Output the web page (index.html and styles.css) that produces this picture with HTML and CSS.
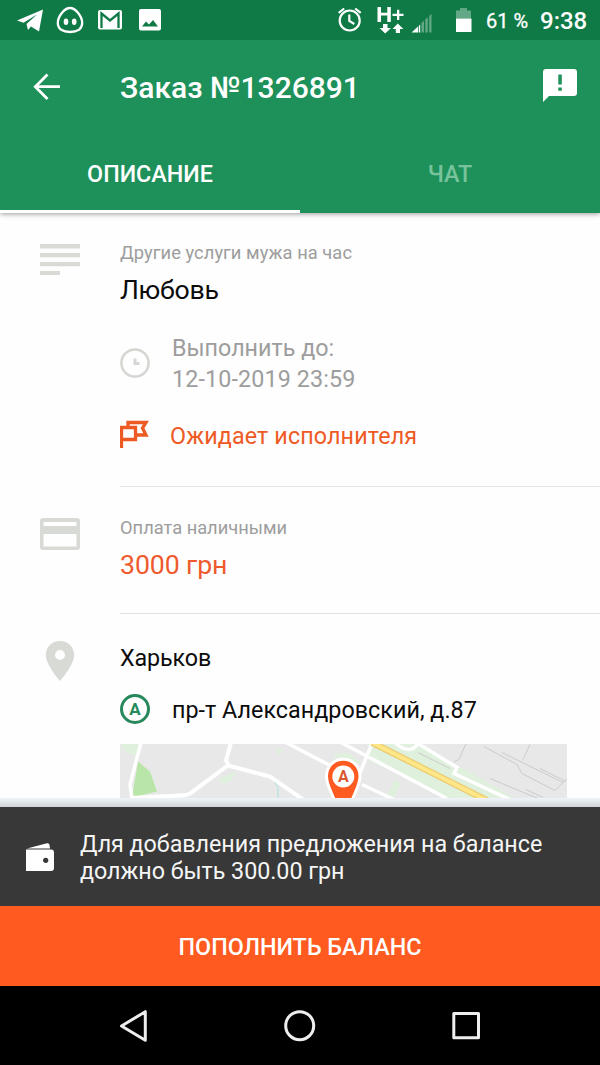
FILE: index.html
```html
<!DOCTYPE html>
<html lang="ru">
<head>
<meta charset="utf-8">
<title>Заказ №1326891</title>
<link rel="stylesheet" href="styles.css">
</head>
<body>
<div class="screen">
  <header class="header">
    <div class="status">
      <svg class="status-left" width="170" height="40" viewBox="0 0 170 40" fill="#fff">
        <path d="M17 20.500 43 9.500 39 31.500 31 26.500 28 30 26.500 24 37 14.500 23.500 22.700z"/>
        <path d="M70 8c5.500 0 12.200 8.500 12.200 15 0 6-5 9-12.200 9s-12.200-3-12.200-9c0-6.500 6.700-15 12.200-15z" fill="none" stroke="#fff" stroke-width="2.300"/>
        <ellipse cx="66" cy="21.700" rx="2.300" ry="3.300"/><ellipse cx="74.200" cy="21.700" rx="2.300" ry="3.300"/>
        <rect x="98" y="10" width="24" height="19.500" rx="2"/>
        <path d="M101.500 28V13.500l8.500 7 8.500-7V28" fill="none" stroke="#0f7a46" stroke-width="2.300"/>
        <path fill-rule="evenodd" d="M141 9h18a2 2 0 0 1 2 2v17.500a2 2 0 0 1-2 2h-18a2 2 0 0 1-2-2V11a2 2 0 0 1 2-2zM142 26.500h16l-5-6.500-4 4.500-3-3z"/>
      </svg>
      <div class="status-right">
        <svg width="150" height="40" viewBox="330 0 150 40" fill="#fff">
          <g fill="none" stroke="#fff" stroke-width="2.200"><circle cx="349.700" cy="20.500" r="10"/><path d="M349.300 14.500v6.500l5 3M338.700 12.800l5.500-4.300M360.700 12.800l-5.500-4.300"/></g>
          <path d="M377.500 7h3.500v5.800h6.300V7h3.500v15h-3.500v-6.500H381V22h-3.500zM397 9.800h2.300v4h4.200v2.200h-4.200v4H397v-4h-4.500v-2.200h4.500z"/>
          <path d="M383 24h4.500v4h3.500l-5.800 5.500-5.700-5.500h3.500zM395.800 33v-4h-3.300l5.300-5.500 5.500 5.500H400v4z"/>
          <path d="M411.500 32.500l6.500-6v6zM418.700 26l1.500-1.500v8h-1.500z"/>
          <path d="M421.500 23l2.500-2.200v11.700h-2.500zM425.300 19.500l2.500-2.300v15.300h-2.500zM429.200 16l2.300-2.200v18.700h-2.300z" opacity=".35"/>
          <path d="M456 18.500v-8h4V8h7v2.500h4v8z" opacity=".35"/><path d="M456 18.500h15.500V32H456z"/>
        </svg>
        <span class="battery">61 %</span>
        <span class="time">9:38</span>
      </div>
    </div>
    <div class="appbar">
      <svg class="back" width="120" height="60" viewBox="0 57 120 60" fill="none" stroke="#fff" stroke-width="2.800"><path d="M60 86.700H35.500M47.500 74.500 35.300 86.700l12.200 12.200"/></svg>
      <h1 class="title">Заказ №1326891</h1>
      <svg class="report" width="34" height="34" viewBox="0 0 34 34"><path fill="#fff" d="M3 0h28a3 3 0 0 1 3 3v21a3 3 0 0 1-3 3H6l-6 6V3a3 3 0 0 1 3-3z"/><path fill="#1e915b" d="M15.300 5.500h3.500v10h-3.500zM15.300 18.500h3.500v3.300h-3.500z"/></svg>
    </div>
    <nav class="tabs">
      <div class="tab tab-active">ОПИСАНИЕ</div>
      <div class="tab">ЧАТ</div>
    </nav>
  </header>

  <main class="content">
    <section class="row">
      <svg class="icon icon-lines" width="40" height="31" viewBox="0 0 40 31" fill="#d8dad5"><path d="M0 0h40v4.500H0zM0 9h40v4.300H0zM0 18h40v4.300H0zM0 27h20v4H0z"/></svg>
      <div class="body body-order">
        <div class="caption category">Другие услуги мужа на час</div>
        <div class="headline name">Любовь</div>
        <div class="line deadline">
          <svg width="30" height="30" viewBox="0 0 30 30" fill="none" stroke="#d5d6d2"><circle cx="15" cy="15" r="13.600" stroke-width="2.500"/><path d="M15 10.500v5h4.500" stroke-width="3"/></svg>
          <div class="deadline-text">Выполнить до:<br><span class="date">12-10-2019 23:59</span></div>
        </div>
        <div class="line state">
          <svg width="29" height="30" viewBox="0 0 29 30" fill="none" stroke="#ee5a24" stroke-width="3.300"><path d="M1.500 29V8.500h14v12h-14M8 8V3.500h18l-3.500 5.500 3.500 7H16"/></svg>
          <span>Ожидает исполнителя</span>
        </div>
      </div>
    </section>
    <section class="row">
      <svg class="icon icon-card" width="40" height="32" viewBox="0 0 40 32"><path fill="#d8dad5" fill-rule="evenodd" d="M3 0h34a3 3 0 0 1 3 3v26a3 3 0 0 1-3 3H3a3 3 0 0 1-3-3V3a3 3 0 0 1 3-3zM3.500 4v4h33V4zM3.500 16v12.500h33V16z"/></svg>
      <div class="body body-pay">
        <div class="caption">Оплата наличными</div>
        <div class="headline price">3000 грн</div>
      </div>
    </section>
    <section class="row">
      <svg class="icon icon-pin" width="40" height="40" viewBox="0 0 40 40"><path fill="#d8dad5" fill-rule="evenodd" d="M20 0c8 0 14.200 6 14.200 14 0 10-14.200 26-14.200 26S5.800 24 5.800 14C5.800 6 12 0 20 0zm0 9a5 5 0 1 0 0 10 5 5 0 0 0 0-10z"/></svg>
      <div class="body body-place">
        <div class="city">Харьков</div>
        <div class="line address">
          <span class="badge">A</span>
          <span>пр-т Александровский, д.87</span>
        </div>
        <svg class="map" width="447" height="54" viewBox="120 744.500 447 54">
          <path fill="#e8e8e8" d="M120 744h447v55H120z"/>
          <path fill="#dff0dd" d="M120 744h20l-4 12-10-3zM367 744h50l68 37 30 18h-68l-78-38zM332 755l15-2 18 12-24-5zM395 780l7 4-9 15h-8zM218 780l18-8-5 9-8 4zM275 749l8 2-3 5z"/>
          <path fill="#b9e6a8" d="M138 762l12 10 7 20-25 6z"/>
          <g fill="none" stroke="#fff" stroke-width="3.500">
            <path d="M141 743l-11 42 2 14"/>
            <path d="M130 798.500l50-2.500q7 0 10-2l38-28 42 11 33 23M229 766l-3-5 5-18" stroke-width="4"/>
            <path d="M286 743l46 24M341 743l106 56M372 744l-14 34M362 785l32 15M395 743c9 9 18 9 23 1l39 24-3 6 58 27"/>
          </g>
          <path d="M372 743l115 58" stroke="#edcb71" stroke-width="6.500" fill="none"/>
          <path d="M372 743l115 58" stroke="#ffe687" stroke-width="4" fill="none"/>
          <g fill="none" stroke="#cbcbcb" stroke-width="1">
            <path d="M466 744l-7 16-5 2M530 745l-7 15M484 747l33 18 5 9 33 17 12-12M502 753l61 30M490 779l48 20M540 769l26 13M526 790l17 8M418 753l32 16"/>
          </g>
          <path d="M275 783l3 5v14" fill="none" stroke="#a5e2dc"/>
          <path d="M343.300 759.800c9 0 16.700 7 16.700 17 0 9-5 15-9 27h-15.500c-4-12-9-18-9-27 0-10 7.500-17 16.800-17z" fill="#ff5a20" stroke="#fff" stroke-width="3"/>
          <circle cx="343.300" cy="777" r="11" fill="#fff"/>
          <text x="343.300" y="782.700" class="map-letter">A</text>
        </svg>
      </div>
    </section>
  </main>

  <footer class="footer">
    <div class="notice">
      <svg class="wallet" width="28" height="28" viewBox="0 0 28 28"><path fill="#fff" d="M1 5.500 21 .300q2-.500 2.500 1.500L24 5.500zM0 6.500h25a3 3 0 0 1 3 3V25a3 3 0 0 1-3 3H0z"/><circle cx="19.700" cy="17.300" r="2.600" fill="#383838"/></svg>
      <div class="notice-text">Для добавления предложения на балансе<br>должно быть 300.00 грн</div>
    </div>
    <div class="topup">ПОПОЛНИТЬ БАЛАНС</div>
    <div class="navbar">
      <svg width="600" height="79" viewBox="0 986 600 79" fill="none" stroke="#eee" stroke-width="3" stroke-linejoin="round"><path d="M121.500 1026 145.300 1011.700v28.600z"/><circle cx="299.700" cy="1025.700" r="14"/><path d="M453.800 1013.500h24.700v24.300h-24.700z"/></svg>
    </div>
  </footer>
</div>
</body>
</html>
```
FILE: styles.css
```css
* { box-sizing: border-box; }
body { margin: 0; font-family: Roboto, "Noto Sans", sans-serif; background: #fefefe; color: #0c0c0c; }
svg { display: block; flex: none; }
span { white-space: nowrap; }
.screen { width: 600px; height: 1065px; display: flex; flex-direction: column; overflow: hidden; }
.header { flex: none; height: 213px; background: #1e915b; color: #fff; box-shadow: 0 1px 5px rgba(0, 0, 0, .4); }
.status { height: 40px; background: #0f7a46; display: flex; justify-content: space-between; }
.status-right { display: flex; align-items: center; width: 270px; line-height: 40px; }
.battery { margin-left: 6px; font-size: 20px; width: 54px; padding-top: 1px; -webkit-text-stroke: .3px #fff; }
.time { font-size: 24px; font-weight: 500; padding-top: 2px; }
.appbar { height: 94px; display: flex; align-items: center; }
.title { margin: 0; flex: 1; font-size: 30px; font-weight: 500; line-height: 40px; padding-top: 2px; }
.report { margin-right: 23px; margin-top: -2px; }
.tabs { display: flex; height: 79px; font-size: 23.300px; font-weight: 500; line-height: 81px; text-align: center; }
.tab { flex: 1; height: 79px; color: #78c39c; }
.tab-active { color: #fff; border-bottom: 3px solid #fff; }
.content { flex: none; height: 585px; overflow: hidden; }
.row { display: grid; grid-template-columns: 120px 1fr; }
.icon { margin-left: 40px; }
.icon-lines { margin-top: 31px; }
.icon-card { margin-top: 31px; }
.icon-pin { margin-top: 27px; }
.body-order { padding: 28px 0 35px; border-bottom: 1px solid #e2e2e2; }
.body-pay { padding: 29px 0 31px; border-bottom: 1px solid #e2e2e2; }
.body-place { padding-top: 29px; }
.caption { font-size: 18.300px; line-height: 24px; color: #9d9d9d; }
.category { letter-spacing: .07px; }
.headline { font-size: 26.700px; line-height: 34px; margin-top: 8px; }
.name { letter-spacing: -.3px; }
.price { color: #ee5a2e; letter-spacing: -.1px; }
.line { display: flex; align-items: center; }
.deadline { margin-top: 26px; gap: 22px; font-size: 23.300px; line-height: 31px; color: #9d9d9d; }
.deadline svg { margin-top: -2px; }
.date { letter-spacing: .13px; }
.state { margin-top: 26px; gap: 21px; font-size: 23.300px; line-height: 30px; color: #ee5a24; letter-spacing: .13px; }
.state svg { margin-top: -4px; }
.city { font-size: 23.300px; line-height: 30px; letter-spacing: -.1px; }
.address { margin-top: 22px; gap: 22px; font-size: 23.300px; line-height: 30px; letter-spacing: .03px; }
.badge { width: 30px; height: 30px; margin-top: -2px; border: 3px solid #27885c; border-radius: 50%; color: #27885c; font-size: 17px; font-weight: 700; line-height: 25px; text-align: center; }
.map { margin-top: 19px; }
.map-letter { font: 700 16px Roboto, sans-serif; text-anchor: middle; fill: #d9592f; }
.footer { flex: none; padding-top: 9px; background: linear-gradient(#f0f4f8 0, #e5eaee 3px, #d0d3d8 9px); }
.notice { height: 99px; background: #383838; color: #f5f5f5; display: flex; align-items: center; font-size: 23.300px; line-height: 27px; letter-spacing: -.04px; }
.wallet { margin: 0 26px; }
.notice-text { padding-top: 3px; }
.topup { height: 80px; background: #ff5a20; color: #fff; text-align: center; font-size: 23.300px; font-weight: 500; line-height: 82px; }
.navbar { height: 79px; background: #000; }
```
